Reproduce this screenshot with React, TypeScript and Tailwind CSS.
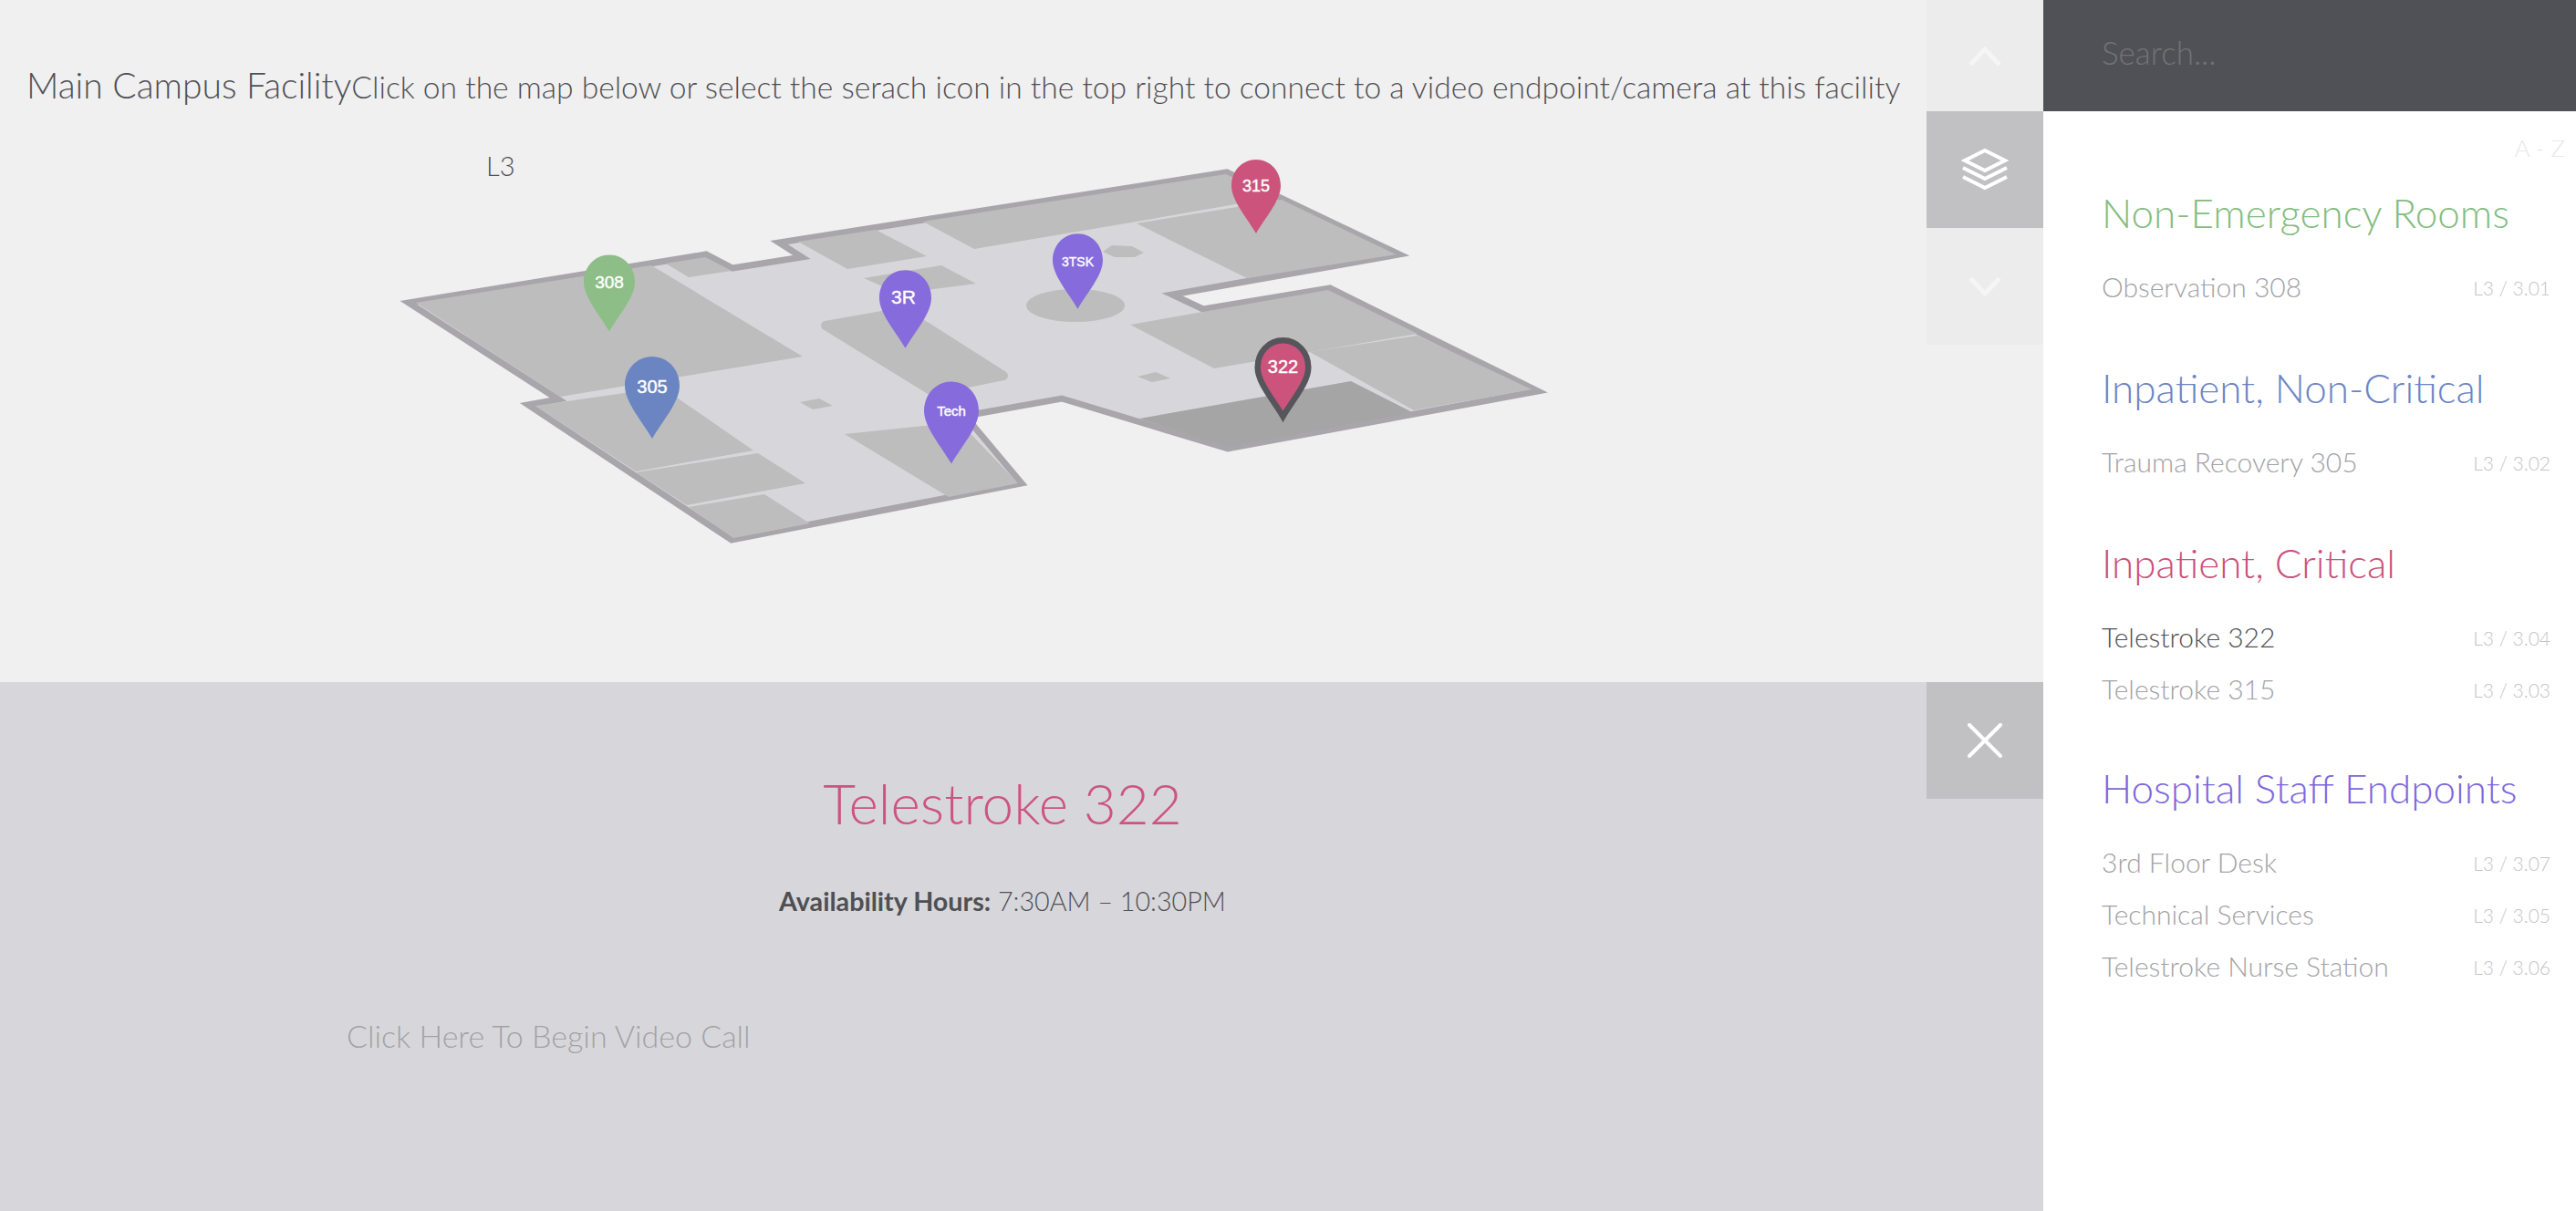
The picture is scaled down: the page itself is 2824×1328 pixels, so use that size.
import React from "react";

const sections = [
  {
    title: "Non-Emergency Rooms",
    color: "text-[#84bd80]",
    gap: "mb-[56px]",
    rows: [{ name: "Observation 308", code: "L3 / 3.01" }],
  },
  {
    title: "Inpatient, Non-Critical",
    color: "text-[#6b84c4]",
    gap: "mb-[56px]",
    rows: [{ name: "Trauma Recovery 305", code: "L3 / 3.02" }],
  },
  {
    title: "Inpatient, Critical",
    color: "text-[#cc4f7b]",
    gap: "mb-[54px]",
    rows: [
      { name: "Telestroke 322", code: "L3 / 3.04", active: true },
      { name: "Telestroke 315", code: "L3 / 3.03" },
    ],
  },
  {
    title: "Hospital Staff Endpoints",
    color: "text-[#7d66dc]",
    gap: "mb-[56px]",
    rows: [
      { name: "3rd Floor Desk", code: "L3 / 3.07" },
      { name: "Technical Services", code: "L3 / 3.05" },
      { name: "Telestroke Nurse Station", code: "L3 / 3.06" },
    ],
  },
];

const pins = [
  { label: "308", box: "left-[640px] top-[279px] w-[56px] h-[85px]", fill: "fill-[#8dbe87]", text: "text-[19px] top-[21px]" },
  { label: "305", box: "left-[685px] top-[391px] w-[60px] h-[90px]", fill: "fill-[#6b85c3]", text: "text-[20px] top-[23px]" },
  { label: "3R", box: "left-[964px] top-[296px] w-[57px] h-[86px]", fill: "fill-[#866bdc]", text: "text-[21px] top-[19px] pr-[4px]" },
  { label: "Tech", box: "left-[1013px] top-[418px] w-[60px] h-[91px]", fill: "fill-[#866bdc]", text: "text-[15px] top-[25px]" },
  { label: "315", box: "left-[1350px] top-[175px] w-[54px] h-[81px]", fill: "fill-[#cc547c]", text: "text-[18px] top-[20px]" },
  { label: "3TSK", box: "left-[1154px] top-[256px] w-[55px] h-[83px]", fill: "fill-[#866bdc]", text: "text-[14px] top-[24px]" },
];

const PIN_PATH = "M30 0C47 0 60 14 60 32C60 50 41 71 30 90C19 71 0 50 0 32C0 14 13 0 30 0Z";

const FloorPlan = () => (
  <svg viewBox="0 0 2112 748" className="absolute left-0 top-0 w-[2112px] h-[748px]">
    <path
      d="M448 332L774 279L803 294L879 282L854 266L1345 189L1534 279L1285 323L1319 339L1458 316L1686 429L1346 492L1164 437L1058 456L1120 530L802 592L579 444L612 438Z"
      fill="#d7d7db"
      stroke="#a8a6ab"
      strokeWidth="7"
      strokeLinejoin="miter"
      strokeMiterlimit="10"
    />
    <g fill="#bdbdbd">
      <path d="M456 332L714 291L880 391L614 435Z" />
      <path d="M587 445L726 425L826 494L697 517Z" />
      <path d="M697 518L831 497L883 530L753 554Z" />
      <path d="M755 556L838 542L888 574L804 590Z" />
      <path d="M730 289L773 282L802 297L755 304Z" />
      <path d="M877 441L898 437L913 445L891 449Z" />
      <path d="M905 357L990 342L1100 412L1020 428Z" stroke="#bdbdbd" strokeWidth="10" strokeLinejoin="round" />
      <path d="M875 265L960 252L1016 281L929 295Z" />
      <path d="M947 305L1032 291L1070 311L985 322Z" />
      <path d="M1012 243L1344 191L1400 216L1246 243L1068 273Z" />
      <path d="M1246 245L1405 219L1530 279L1367 305Z" />
      <path d="M1209 276L1219 269L1241 270L1254 277L1244 282L1222 282Z" />
      <ellipse cx="1179" cy="335" rx="54" ry="18" />
      <path d="M1239 356L1456 318L1554 366L1331 404Z" />
      <path d="M1436 386L1554 368L1679 427L1550 450Z" />
      <path d="M1247 413L1267 408L1283 415L1263 419Z" />
      <path d="M926 476L1052 463L1116 530L1040 545Z" />
    </g>
    <path d="M1249 459L1481 418L1548 452L1346 490Z" fill="#a5a5a5" />
  </svg>
);

const MapPin = ({ label, box, fill, text }: { label: string; box: string; fill: string; text: string }) => (
  <div className={`absolute ${box}`}>
    <svg viewBox="0 0 60 90" className="w-full h-full">
      <path d={PIN_PATH} className={fill} />
    </svg>
    <span className={`absolute inset-x-0 text-center text-white leading-none [-webkit-text-stroke:0.4px_#ffffff] font-['Liberation_Sans',sans-serif] ${text}`}>
      {label}
    </span>
  </div>
);

const SelectedPin = () => (
  <div className="absolute left-[1375px] top-[367px] w-[63px] h-[96px]">
    <svg viewBox="-4 -4 68 98" className="w-full h-full">
      <path d={PIN_PATH} fill="#cc547c" stroke="#55555b" strokeWidth="7" />
    </svg>
    <span className="absolute inset-x-0 top-[25px] text-center text-white text-[20px] leading-none [-webkit-text-stroke:0.4px_#ffffff] font-['Liberation_Sans',sans-serif]">
      322
    </span>
  </div>
);

const LayersIcon = () => (
  <svg viewBox="0 0 52 46" className="w-[52px] h-[46px]" fill="none" stroke="#ffffff" strokeWidth="4">
    <path d="M26 2L48 13L26 24L4 13Z" />
    <path d="M2 21L26 33L50 21" />
    <path d="M2 31L26 43L50 31" />
  </svg>
);

export default function App() {
  return (
    <div className="flex w-[2824px] h-[1328px] overflow-hidden bg-white text-[#4f4f54] font-['Lato',sans-serif] font-light">
      <main className="flex flex-col w-[2240px]">
        <section className="flex h-[748px] bg-[#f0f0f0]">
          <div className="relative flex-1">
            <FloorPlan />
            {pins.map((p) => (
              <MapPin key={p.label} {...p} />
            ))}
            <SelectedPin />
            <div className="relative flex items-baseline pl-[29px] pt-[70px] whitespace-nowrap">
              <h1 className="text-[39px] leading-[46px] font-light">Main Campus Facility</h1>
              <p className="text-[33.6px] leading-[46px]">
                Click on the map below or select the serach icon in the top right to connect to a video endpoint/camera at this facility
              </p>
            </div>
            <div className="relative pl-[533px] pt-[46px] text-[29px] leading-[36px]">L3</div>
          </div>
          <div className="flex flex-col w-[128px]">
            <button className="flex items-center justify-center h-[122px] bg-[#ececec]">
              <svg viewBox="0 0 36 21" className="w-[36px] h-[21px]" fill="none" stroke="#f5f5f5" strokeWidth="5">
                <path d="M2 20L18 3L34 20" />
              </svg>
            </button>
            <button className="flex items-center justify-center h-[128px] bg-[#c1c1c3]">
              <LayersIcon />
            </button>
            <button className="flex items-center justify-center h-[128px] bg-[#ececec]">
              <svg viewBox="0 0 36 21" className="w-[36px] h-[21px]" fill="none" stroke="#f5f5f5" strokeWidth="5">
                <path d="M2 1L18 18L34 1" />
              </svg>
            </button>
          </div>
        </section>
        <section className="flex flex-1 bg-[#d7d7db]">
          <div className="flex-1">
            <div className="pl-[86px] pt-[100px] text-center">
              <h2 className="text-[62px] leading-[64px] font-light text-[#cc557f]">Telestroke 322</h2>
              <p className="mt-[58px] text-[28.7px] leading-[36px] text-[#4f4f54]">
                <b className="font-bold">Availability Hours:</b> 7:30AM – 10:30PM
              </p>
            </div>
            <div className="pl-[380px] pt-[110px] text-[34px] leading-[40px] text-[#a2a2a6]">Click Here To Begin Video Call</div>
          </div>
          <button className="flex items-center justify-center w-[128px] h-[128px] bg-[#c1c1c3]">
            <svg viewBox="0 0 38 38" className="w-[38px] h-[38px]" fill="none" stroke="#ffffff" strokeWidth="4" strokeLinecap="round">
              <path d="M2 2L36 36M36 2L2 36" />
            </svg>
          </button>
        </section>
      </main>
      <aside className="w-[584px]">
        <div className="flex items-center h-[122px] pl-[64px] pb-[8px] bg-[#505156] text-[35px] text-[#737377]">Search...</div>
        <div className="pr-[12px] pt-[22px] text-right text-[26px] leading-[36px] text-[#e8e8ea]">A - Z</div>
        <div className="pl-[64px] pr-[28px] pt-[27px]">
          {sections.map((s) => (
            <div key={s.title} className={s.gap}>
              <h3 className={`text-[44px] leading-[52px] mb-[27px] whitespace-nowrap ${s.color}`}>{s.title}</h3>
              {s.rows.map((r) => (
                <div key={r.name} className="flex items-center justify-between h-[57px]">
                  <span className={`text-[30px] ${r.active ? "text-[#4f4f54]" : "text-[#a2a2a6]"}`}>{r.name}</span>
                  <span className="text-[21px] pt-[3px] text-[#c4c4c7]">{r.code}</span>
                </div>
              ))}
            </div>
          ))}
        </div>
      </aside>
    </div>
  );
}
